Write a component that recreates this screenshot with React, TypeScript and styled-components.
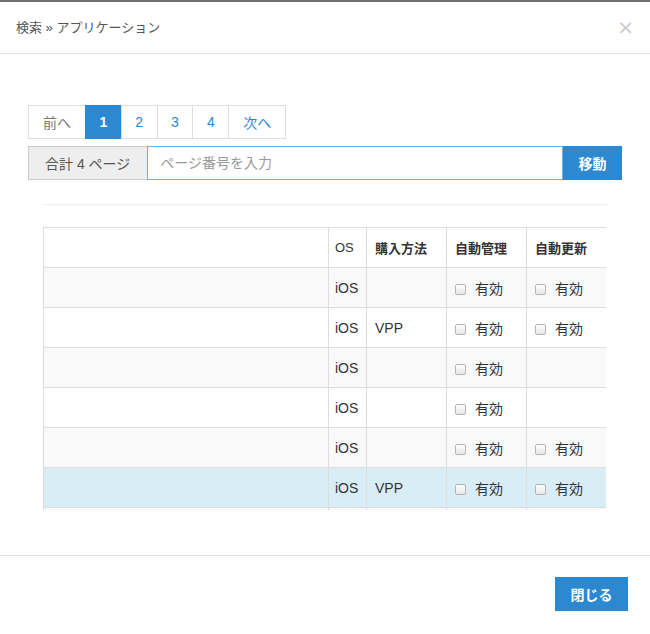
import styled, { createGlobalStyle } from "styled-components";

const GlobalStyle = createGlobalStyle`
  html, body {
    margin: 0;
    padding: 0;
    background: #fff;
  }
  body {
    font-family: "Liberation Sans", "Noto Sans CJK JP", sans-serif;
    font-size: 14px;
    color: #333;
  }
  * {
    box-sizing: border-box;
  }
`;

const BLUE = "#2b88d1";

const Modal = styled.div`
  width: 650px;
  height: 634px;
  display: flex;
  flex-direction: column;
  background: #fff;
  border-top: 2px solid #6f6f6f;
`;

const Header = styled.div`
  height: 52px;
  display: flex;
  align-items: center;
  justify-content: space-between;
  padding: 0 16px 2px 16px;
  border-bottom: 1px solid #e5e5e5;
`;

const Title = styled.h4`
  margin: 0;
  font-size: 13px;
  font-weight: normal;
  color: #555;
`;

const Close = styled.span`
  font-size: 20px;
  color: #c8c8c8;
  line-height: 1;
  font-family: "DejaVu Sans", sans-serif;
`;

const Body = styled.div`
  flex: 1;
  padding: 51px 28px 0 28px;
`;

const Pagination = styled.ul`
  display: flex;
  margin: 0;
  padding: 0;
  list-style: none;
`;

const PageItem = styled.li<{ $active?: boolean; $wide?: boolean }>`
  height: 34px;
  padding: 0 ${(p) => (p.$wide ? 14 : 13.5)}px;
  display: flex;
  align-items: center;
  border: 1px solid #ddd;
  margin-left: -1px;
  font-size: 14px;
  color: ${(p) => (p.$active ? "#fff" : BLUE)};
  background: ${(p) => (p.$active ? BLUE : "#fff")};
  border-color: ${(p) => (p.$active ? BLUE : "#ddd")};
  font-weight: ${(p) => (p.$active ? "bold" : "normal")};
  &:first-child {
    margin-left: 0;
    color: #777;
  }
`;

const InputGroup = styled.div`
  display: flex;
  height: 34px;
  margin-top: 7px;
`;

const Addon = styled.span`
  display: flex;
  align-items: center;
  padding: 0 17px 0 16px;
  background: #eee;
  border: 1px solid #ccc;
  border-right: 0;
  font-size: 14px;
  color: #555;
  white-space: nowrap;
`;

const PageInput = styled.input`
  flex: 1;
  height: 34px;
  border: 1px solid #66afe9;
  padding: 0 12px;
  font-family: inherit;
  font-size: 14px;
  color: #555;
  outline: none;
  &::placeholder {
    color: #999;
  }
`;

const GoButton = styled.button`
  width: 59px;
  border: 1px solid ${BLUE};
  background: ${BLUE};
  color: #fff;
  font-family: inherit;
  font-size: 14px;
  font-weight: bold;
  padding: 0;
`;

const Rule = styled.hr`
  margin: 24px 15px 22px 15px;
  border: 0;
  border-top: 1px solid #eee;
`;

const TableWrap = styled.div`
  margin: 0 16px 0 15px;
  height: 283px;
  overflow: hidden;
`;

const Table = styled.table`
  width: 100%;
  border-collapse: collapse;
  table-layout: fixed;
  font-size: 14px;
`;

const Th = styled.th`
  height: 40px;
  padding: 0 8px;
  border: 1px solid #ddd;
  text-align: left;
  font-weight: bold;
  font-size: 13px;
  color: #333;
  &:nth-child(2) {
    padding-left: 6px;
    font-weight: normal;
  }
`;

const Row = styled.tr<{ $tone: "odd" | "even" | "info" }>`
  background: ${(p) =>
    p.$tone === "info" ? "#d9edf7" : p.$tone === "odd" ? "#f9f9f9" : "#fff"};
`;

const Td = styled.td`
  height: 40px;
  padding: 0 8px;
  border: 1px solid #ddd;
  font-size: 14px;
  &:nth-child(2) {
    padding-left: 6px;
  }
`;

const Check = styled.label`
  display: inline-flex;
  align-items: center;
  gap: 9px;
  font-size: 14px;
  color: #333;
`;

const Box = styled.span`
  width: 11px;
  height: 11px;
  margin-top: 3px;
  border: 1px solid #b5b5b5;
  border-radius: 2px;
  background: linear-gradient(#fdfdfd, #e6e6e6);
`;

const Footer = styled.div`
  height: 79px;
  border-top: 1px solid #e5e5e5;
  display: flex;
  justify-content: flex-end;
  padding: 21px 22px 0 0;
`;

const CloseButton = styled.button`
  height: 34px;
  width: 73px;
  border: 1px solid ${BLUE};
  background: ${BLUE};
  color: #fff;
  font-family: inherit;
  font-size: 14px;
  font-weight: bold;
`;

type AppRow = { buy: string; manage: boolean; update: boolean };

const rows: AppRow[] = [
  { buy: "", manage: true, update: true },
  { buy: "VPP", manage: true, update: true },
  { buy: "", manage: true, update: false },
  { buy: "", manage: true, update: false },
  { buy: "", manage: true, update: true },
  { buy: "VPP", manage: true, update: true },
];

function Enabled() {
  return (
    <Check>
      <Box />
      有効
    </Check>
  );
}

export default function App() {
  return (
    <>
      <GlobalStyle />
      <Modal>
        <Header>
          <Title>検索 » アプリケーション</Title>
          <Close>×</Close>
        </Header>
        <Body>
          <Pagination>
            <PageItem $wide>前へ</PageItem>
            <PageItem $active>1</PageItem>
            <PageItem>2</PageItem>
            <PageItem>3</PageItem>
            <PageItem>4</PageItem>
            <PageItem $wide>次へ</PageItem>
          </Pagination>
          <InputGroup>
            <Addon>合計 4 ページ</Addon>
            <PageInput placeholder="ページ番号を入力" />
            <GoButton>移動</GoButton>
          </InputGroup>
          <Rule />
          <TableWrap>
            <Table>
              <colgroup>
                <col style={{ width: 285 }} />
                <col style={{ width: 38 }} />
                <col style={{ width: 80 }} />
                <col style={{ width: 80 }} />
                <col style={{ width: 80 }} />
              </colgroup>
              <thead>
                <tr>
                  <Th></Th>
                  <Th>OS</Th>
                  <Th>購入方法</Th>
                  <Th>自動管理</Th>
                  <Th>自動更新</Th>
                </tr>
              </thead>
              <tbody>
                {rows.map((r, i) => (
                  <Row key={i} $tone={i === 5 ? "info" : i % 2 === 0 ? "odd" : "even"}>
                    <Td></Td>
                    <Td>iOS</Td>
                    <Td>{r.buy}</Td>
                    <Td>{r.manage && <Enabled />}</Td>
                    <Td>{r.update && <Enabled />}</Td>
                  </Row>
                ))}
                <Row $tone="odd">
                  <Td></Td>
                  <Td></Td>
                  <Td></Td>
                  <Td></Td>
                  <Td></Td>
                </Row>
              </tbody>
            </Table>
          </TableWrap>
        </Body>
        <Footer>
          <CloseButton>閉じる</CloseButton>
        </Footer>
      </Modal>
    </>
  );
}
